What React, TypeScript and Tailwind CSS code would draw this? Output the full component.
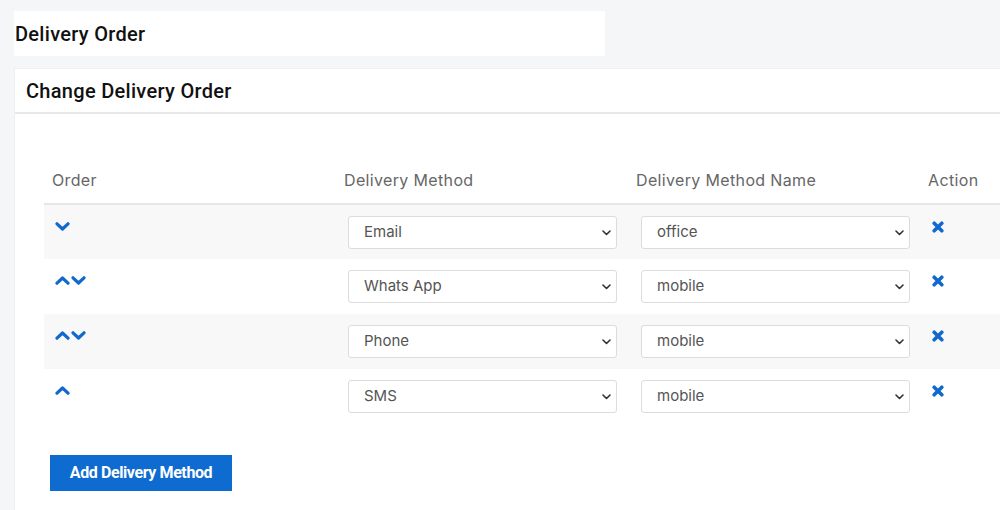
import { ChangeEvent, useState } from "react";

type Row = { method: string; name: string };

const methods = ["Email", "Whats App", "Phone", "SMS"];
const names = ["office", "mobile", "home"];

function ChevronUp() {
  return (
    <svg width="15" height="9" viewBox="0 0 15 9" fill="none">
      <path d="M2 7.2 L7.5 2 L13 7.2" stroke="#1169cd" strokeWidth="3.2" strokeLinejoin="round" strokeLinecap="round" />
    </svg>
  );
}

function ChevronDown() {
  return (
    <svg width="15" height="9" viewBox="0 0 15 9" fill="none">
      <path d="M2 1.8 L7.5 7 L13 1.8" stroke="#1169cd" strokeWidth="3.2" strokeLinejoin="round" strokeLinecap="round" />
    </svg>
  );
}

function Times() {
  return (
    <svg width="12" height="12" viewBox="0 0 12 12" fill="none">
      <path d="M2.2 2.2 L9.8 9.8 M9.8 2.2 L2.2 9.8" stroke="#1169cd" strokeWidth="3.6" strokeLinecap="round" />
    </svg>
  );
}

function Select({ value, options, onChange }: { value: string; options: string[]; onChange: (v: string) => void }) {
  return (
    <div className="relative w-[269px]">
      <select
        value={value}
        onChange={(e: ChangeEvent<HTMLSelectElement>) => onChange(e.target.value)}
        className="w-full h-[33px] appearance-none bg-white border border-[#dcdcdc] rounded-[3px] pl-[15px] pr-8 text-[15px] text-[#555] outline-none"
      >
        {options.map((o) => (
          <option key={o}>{o}</option>
        ))}
      </select>
      <svg className="absolute right-[6px] top-[14px] pointer-events-none" width="9" height="6" viewBox="0 0 9 6" fill="none">
        <path d="M1 1 L4.5 4.5 L8 1" stroke="#333" strokeWidth="1.6" strokeLinecap="round" strokeLinejoin="round" />
      </svg>
    </div>
  );
}

export default function App() {
  const [rows, setRows] = useState<Row[]>([
    { method: "Email", name: "office" },
    { method: "Whats App", name: "mobile" },
    { method: "Phone", name: "mobile" },
    { method: "SMS", name: "mobile" },
  ]);

  const update = (i: number, key: keyof Row, v: string) =>
    setRows(rows.map((r, j) => (j === i ? { ...r, [key]: v } : r)));

  const move = (i: number, d: number) => {
    const next = [...rows];
    [next[i], next[i + d]] = [next[i + d], next[i]];
    setRows(next);
  };

  return (
    <div className="w-[1000px] h-[510px] overflow-hidden bg-[#f5f6f8] font-['Inter',sans-serif]">
      <div className="pt-[11px] pl-[14px]">
        <div className="w-[591px] h-[45px] bg-white flex items-center pl-[1px]">
          <h1 className="font-['Roboto',sans-serif] text-[20px] font-medium text-[#111] tracking-[0.3px]">Delivery Order</h1>
        </div>

        <div className="mt-[12px] w-[1050px] bg-white border border-[#eceef1]">
          <div className="h-[45px] flex items-center pl-[11px] border-b-2 border-[#e8e8e8]">
            <h2 className="font-['Roboto',sans-serif] text-[20px] font-medium text-[#111] tracking-[0.3px]">Change Delivery Order</h2>
          </div>

          <div className="pl-[29px] pt-[54px] pb-[40px]">
            <table className="w-[1020px] table-fixed border-collapse text-left">
              <colgroup>
                <col className="w-[292px]" />
                <col className="w-[292px]" />
                <col className="w-[292px]" />
                <col />
              </colgroup>
              <thead>
                <tr className="border-b-2 border-[#e6e6e6]">
                  <th className="px-2 pb-[11px] text-[16px] tracking-[0.35px] font-normal text-[#666]">Order</th>
                  <th className="px-2 pb-[11px] text-[16px] tracking-[0.35px] font-normal text-[#666]">Delivery Method</th>
                  <th className="px-2 pb-[11px] text-[16px] tracking-[0.35px] font-normal text-[#666]">Delivery Method Name</th>
                  <th className="px-2 pb-[11px] text-[16px] tracking-[0.35px] font-normal text-[#666]">Action</th>
                </tr>
              </thead>
              <tbody>
                {rows.map((r, i) => (
                  <tr key={i} className={i % 2 === 0 ? "bg-[#f8f8f8]" : "bg-white"}>
                    <td className="h-[55px] pl-[11px] pt-[17px] align-top">
                      <div className="flex gap-[1px]">
                        {i > 0 && (
                          <button onClick={() => move(i, -1)}>
                            <ChevronUp />
                          </button>
                        )}
                        {i < rows.length - 1 && (
                          <button onClick={() => move(i, 1)}>
                            <ChevronDown />
                          </button>
                        )}
                      </div>
                    </td>
                    <td className="pl-[12px] pt-[11px] align-top">
                      <Select value={r.method} options={methods} onChange={(v) => update(i, "method", v)} />
                    </td>
                    <td className="pl-[13px] pt-[11px] align-top">
                      <Select value={r.name} options={names} onChange={(v) => update(i, "name", v)} />
                    </td>
                    <td className="pl-[12px] pt-[16px] align-top">
                      <button className="block" onClick={() => setRows(rows.filter((_, j) => j !== i))}>
                        <Times />
                      </button>
                    </td>
                  </tr>
                ))}
              </tbody>
            </table>

            <button className="mt-[31px] ml-[6px] w-[182px] h-[36px] bg-[#0e6bcf] text-white font-['Roboto',sans-serif] font-bold text-[16px] tracking-[-0.4px]">
              Add Delivery Method
            </button>
          </div>
        </div>
      </div>
    </div>
  );
}
